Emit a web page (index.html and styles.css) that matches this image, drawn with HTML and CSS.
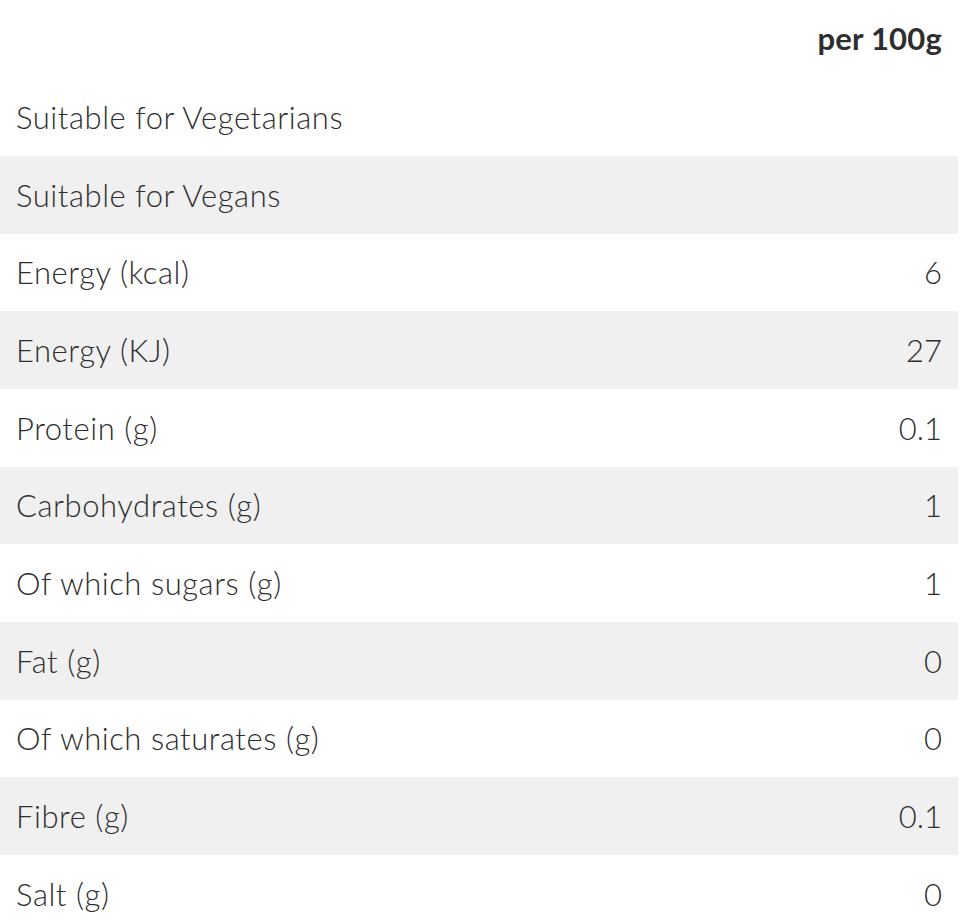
FILE: index.html
```html
<!DOCTYPE html>
<html lang="en">
<head>
<meta charset="utf-8">
<title>Nutrition</title>
<link rel="stylesheet" href="styles.css">
</head>
<body>
<table class="nutrition">
  <thead>
    <tr class="head-row"><th class="label-col"></th><th class="value-col">per 100g</th></tr>
  </thead>
  <tbody>
    <tr><td>Suitable for Vegetarians</td><td class="value"></td></tr>
    <tr><td>Suitable for Vegans</td><td class="value"></td></tr>
    <tr><td>Energy (kcal)</td><td class="value">6</td></tr>
    <tr><td>Energy (KJ)</td><td class="value">27</td></tr>
    <tr><td>Protein (g)</td><td class="value">0.1</td></tr>
    <tr><td>Carbohydrates (g)</td><td class="value">1</td></tr>
    <tr><td>Of which sugars (g)</td><td class="value">1</td></tr>
    <tr><td>Fat (g)</td><td class="value">0</td></tr>
    <tr><td>Of which saturates (g)</td><td class="value">0</td></tr>
    <tr><td>Fibre (g)</td><td class="value">0.1</td></tr>
    <tr><td>Salt (g)</td><td class="value">0</td></tr>
  </tbody>
</table>
</body>
</html>
```
FILE: styles.css
```css
html, body {
  margin: 0;
  padding: 0;
  background: #fff;
}
body {
  font-family: Lato, "Noto Sans", sans-serif;
  color: #2e2e2e;
}
.nutrition {
  width: 958px;
  border-collapse: collapse;
  font-size: 31px;
  font-weight: 300;
  letter-spacing: 0.55px;
}
.head-row th {
  height: 78.33px;
  padding: 0 16px 2px;
  font-weight: 700;
  letter-spacing: 0.2px;
  text-align: right;
  vertical-align: middle;
  box-sizing: border-box;
}
.nutrition td {
  height: 77.67px;
  padding: 0 16px;
  vertical-align: middle;
  box-sizing: border-box;
}
.nutrition td.value {
  text-align: right;
  letter-spacing: 0;
}
.nutrition tbody tr:nth-child(even) {
  background: #f0f0f0;
}
```
